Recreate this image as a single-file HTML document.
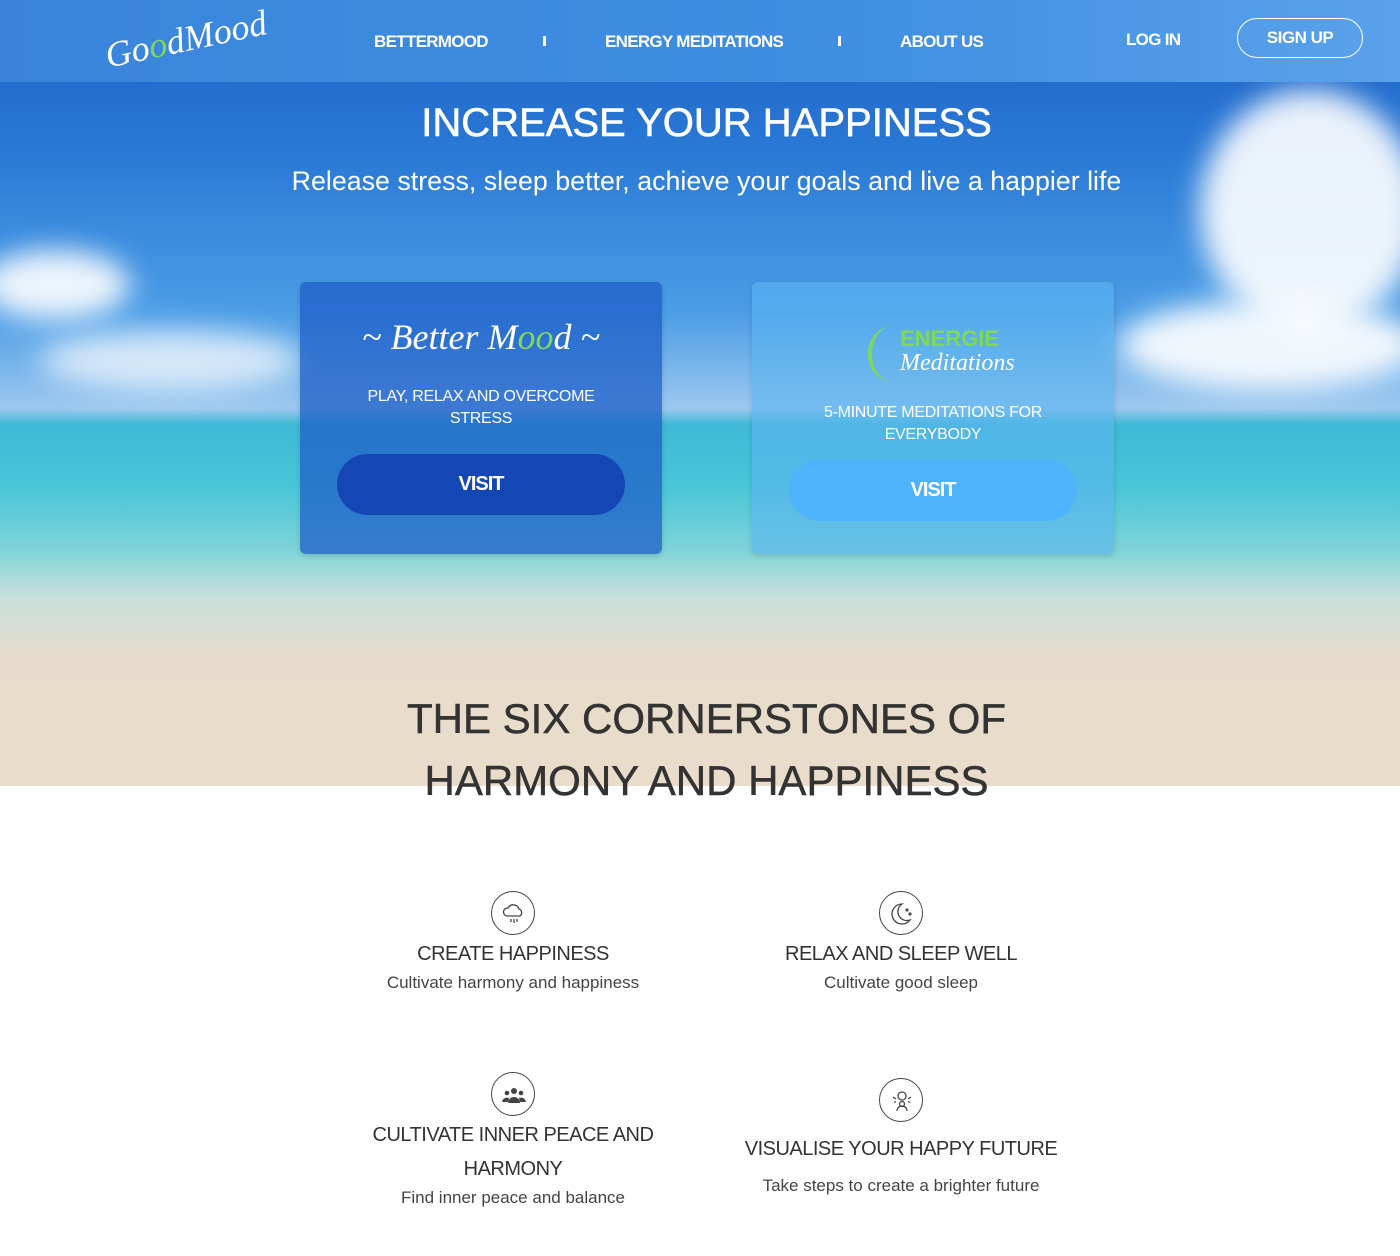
<!DOCTYPE html>
<html><head><meta charset="utf-8"><style>
*{margin:0;padding:0;box-sizing:border-box}
body{width:1400px;height:1256px;background:#fff;font-family:"Liberation Sans",sans-serif;position:relative;overflow:hidden}
.hero{position:absolute;left:0;top:0;width:1400px;height:786px;background:linear-gradient(180deg,#1d5fc4 0%,#2a7ad6 20%,#4d9ee6 40%,#9cc8ef 52%,#3fb9d6 54%,#49c6d8 62%,#7fd4d8 70%,#c9e0dc 76%,#e7dccb 84%,#e9dccb 100%)}
.cloud{position:absolute;background:#fff;border-radius:50%;filter:blur(14px);opacity:.9}
.nav{position:absolute;left:0;top:0;width:1400px;height:82px;background:linear-gradient(90deg,#3a85db,#3f8ee2 60%,#5aa2ea);}
.nav a{position:absolute;color:#fff;font-weight:bold;font-size:17px;top:32px;letter-spacing:-.7px}
.sep{position:absolute;top:36px;width:3px;height:10px;background:#fff}
.logo{position:absolute;left:104px;top:18px;color:#fff;font-family:"Liberation Serif",serif;font-style:italic;font-size:36px;transform:rotate(-12deg)}
.signup{position:absolute;left:1237px;top:18px;width:126px;height:40px;border:1.5px solid #fff;border-radius:20px;color:#fff;font-weight:bold;font-size:17px;text-align:center;line-height:38px;letter-spacing:-.5px}
h1{position:absolute;top:101px;left:0;width:1413px;text-align:center;color:#fff;font-size:40px;font-weight:normal;-webkit-text-stroke:.6px #fff}
.sub{position:absolute;top:166px;left:0;width:1413px;text-align:center;color:#fff;font-size:26.8px}
.card{position:absolute;top:282px;width:362px;height:272px;border-radius:6px;box-shadow:0 2px 6px rgba(0,0,0,.15);text-align:center;color:#fff}
.card p{position:absolute;left:0;width:100%;font-size:16px;line-height:22px;letter-spacing:-.3px}
.btn{position:absolute;left:37px;width:288px;height:61px;border-radius:31px;font-weight:bold;font-size:20px;line-height:61px;letter-spacing:-1px}
h2{position:absolute;top:688px;left:0;width:1413px;text-align:center;color:#333;font-size:42px;font-weight:normal;line-height:62px;-webkit-text-stroke:.5px #333}
.f{position:absolute;text-align:center;width:400px;color:#333}
.f .ic{width:44px;height:44px;border:1.5px solid #444;border-radius:50%;margin:0 auto 2px;position:relative}
.f .ic svg{position:absolute;left:9px;top:9px}
.f h3{font-size:20px;font-weight:normal;line-height:34px;letter-spacing:-.5px}
.f div.t{font-size:17px;color:#444;line-height:24px}
</style></head><body>
<div class="hero">
<div class="cloud" style="left:1200px;top:90px;width:220px;height:240px"></div>
<div class="cloud" style="left:1120px;top:300px;width:300px;height:90px"></div>
<div class="cloud" style="left:-20px;top:250px;width:150px;height:70px"></div>
<div class="cloud" style="left:40px;top:330px;width:260px;height:60px;opacity:.7"></div>
</div>
<div class="nav">
<div class="logo">Go<span style="color:#7ed957">o</span>dMood</div>
<a style="left:374px">BETTERMOOD</a><div class="sep" style="left:543px"></div>
<a style="left:605px">ENERGY MEDITATIONS</a><div class="sep" style="left:838px"></div>
<a style="left:900px">ABOUT US</a>
<a style="left:1126px;top:30px">LOG IN</a>
<div class="signup">SIGN UP</div>
</div>
<h1>INCREASE YOUR HAPPINESS</h1>
<div class="sub">Release stress, sleep better, achieve your goals and live a happier life</div>
<div class="card" style="left:300px;background:rgba(30,95,200,.75)">
<div style="position:absolute;top:34px;width:100%;font-family:'Liberation Serif',serif;font-style:italic;font-size:36px">~ Better M<span style="color:#7ed957">oo</span>d ~</div>
<p style="top:104px">PLAY, RELAX AND OVERCOME<br>STRESS</p>
<div class="btn" style="top:172px;background:#1446b4">VISIT</div>
</div>
<div class="card" style="left:752px;background:rgba(90,180,240,.6)">
<div style="position:absolute;left:116px;top:44px;width:50px;height:56px;border-left:4px solid #7ed957;border-radius:50%"></div>
<div style="position:absolute;left:148px;top:44px;color:#7ed957;font-size:22px;font-weight:bold;text-align:left">ENERGIE</div>
<div style="position:absolute;left:148px;top:68px;font-family:'Liberation Serif',serif;font-style:italic;font-size:24px">Meditations</div>
<p style="top:120px">5-MINUTE MEDITATIONS FOR<br>EVERYBODY</p>
<div class="btn" style="top:178px;background:#4fb3fb">VISIT</div>
</div>
<h2>THE SIX CORNERSTONES OF<br>HARMONY AND HAPPINESS</h2>
<div class="f" style="left:313px;top:891px"><div class="ic"><svg width="26" height="26" viewBox="0 0 26 26" fill="none" stroke="#444" stroke-width="1.3"><path d="M6 15a4 4 0 0 1 1-8 6 6 0 0 1 11 1 4 4 0 0 1 1 7z"/><path d="M10 18v3M13 18v4M16 18v3"/></svg></div><h3>CREATE HAPPINESS</h3><div class="t">Cultivate harmony and happiness</div></div>
<div class="f" style="left:701px;top:891px"><div class="ic"><svg width="26" height="26" viewBox="0 0 26 26" fill="none" stroke="#444" stroke-width="1.3"><path d="M13 3a10 10 0 1 0 8 16A9 9 0 0 1 13 3z"/><circle cx="18" cy="9" r="1"/><circle cx="21" cy="13" r="1"/></svg></div><h3>RELAX AND SLEEP WELL</h3><div class="t">Cultivate good sleep</div></div>
<div class="f" style="left:313px;top:1072px"><div class="ic"><svg width="26" height="26" viewBox="0 0 26 26" fill="#444"><circle cx="13" cy="9" r="3"/><circle cx="6" cy="11" r="2.3"/><circle cx="20" cy="11" r="2.3"/><path d="M7 21a6 6 0 0 1 12 0zM1 20a5 5 0 0 1 7-4l-1 4zM25 20a5 5 0 0 0-7-4l1 4z"/></svg></div><h3>CULTIVATE INNER PEACE AND<br>HARMONY</h3><div class="t">Find inner peace and balance</div></div>
<div class="f" style="left:701px;top:1078px"><div class="ic"><svg width="26" height="26" viewBox="0 0 26 26" fill="none" stroke="#444" stroke-width="1.3"><circle cx="13" cy="8" r="4"/><circle cx="13" cy="16" r="2.5"/><path d="M8 23a5 5 0 0 1 10 0M4 9l3 2M22 9l-3 2M5 14h2M19 14h2"/></svg></div><h3 style="margin-top:10px">VISUALISE YOUR HAPPY FUTURE</h3><div class="t" style="margin-top:8px">Take steps to create a brighter future</div></div>
</body></html>
